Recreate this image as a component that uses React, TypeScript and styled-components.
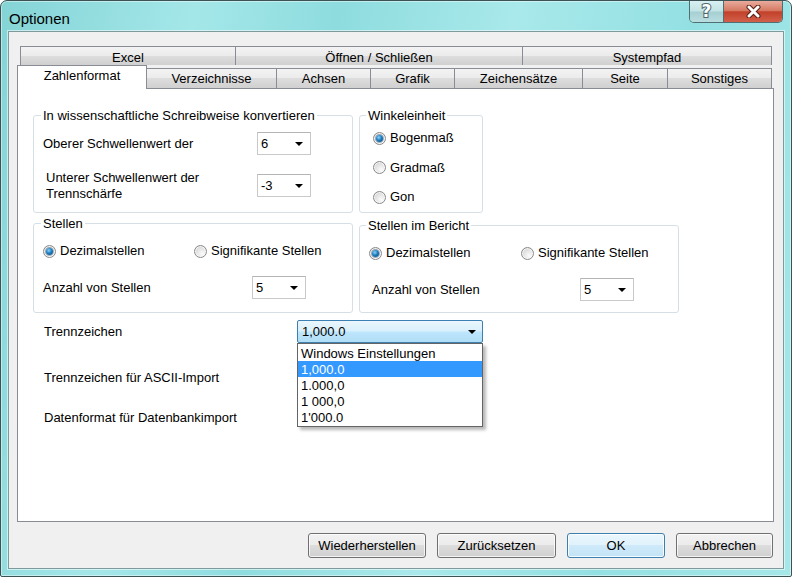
import styled, { createGlobalStyle, css } from "styled-components";

const GlobalStyle = createGlobalStyle`
  * {
    box-sizing: border-box;
  }
  html,
  body {
    margin: 0;
    padding: 0;
  }
  body {
    background: #ffffff;
    font-family: "Liberation Sans", Arial, sans-serif;
    font-size: 13px;
    color: #000000;
  }
`;

const Window = styled.div`
  width: 792px;
  height: 577px;
  display: flex;
  flex-direction: column;
  padding: 0 7px 7px 7px;
  border: 1px solid #3b5354;
  border-radius: 7px 7px 2px 2px;
  background: linear-gradient(
    100deg,
    #84d4d6 0%,
    #a4e7e9 22%,
    #8edcde 38%,
    #a9e9eb 58%,
    #93e0e2 78%,
    #a6e7e8 100%
  );
  box-shadow: inset 0 0 0 1px rgba(255, 255, 255, 0.45);
`;

const TitleBar = styled.div`
  height: 30px;
  display: flex;
  justify-content: space-between;
  align-items: flex-start;
`;

const Title = styled.div`
  margin: 9px 0 0 1px;
  font-size: 15px;
  line-height: 18px;
  color: #000;
`;

const CaptionButtons = styled.div`
  display: flex;
  margin-right: 1px;
  height: 22px;
  border: 1px solid #4f6f72;
  border-top: none;
  border-radius: 0 0 5px 5px;
  overflow: hidden;
`;

const HelpButton = styled.div`
  width: 34px;
  display: flex;
  align-items: center;
  justify-content: center;
  border-right: 1px solid #4f6f72;
  background: linear-gradient(#d9f0f1 0%, #c3e3e5 48%, #a6cfd2 52%, #b9dee0 100%);
`;

const HelpGlyph = styled.span`
  font-family: "DejaVu Sans", "Liberation Sans", sans-serif;
  font-weight: bold;
  font-size: 17px;
  line-height: 17px;
  color: #ffffff;
  -webkit-text-stroke: 2px #4d686b;
  paint-order: stroke fill;
`;

const CloseButton = styled.div`
  width: 58px;
  display: flex;
  align-items: center;
  justify-content: center;
  background: linear-gradient(#e8ab9d 0%, #d67a64 45%, #c2412a 52%, #d2604a 100%);
`;

const Client = styled.div`
  flex: 1;
  display: flex;
  flex-direction: column;
  background: #f0f0f0;
  border: 1px solid #7f9a9c;
  padding: 14px 9px 0 8px;
  box-shadow: 0 0 0 1px rgba(255, 255, 255, 0.55);
`;

const TabRow = styled.div<{ $lower?: boolean }>`
  display: flex;
  height: ${(p) => (p.$lower ? 23 : 19)}px;
  align-items: flex-end;
  margin-left: ${(p) => (p.$lower ? 0 : 3)}px;
`;

const Tab = styled.div<{ $w: number; $active?: boolean; $upper?: boolean }>`
  flex: none;
  width: ${(p) => p.$w}px;
  height: ${(p) => (p.$upper ? 19 : 20)}px;
  margin-left: -1px;
  padding-top: ${(p) => (p.$upper ? 3 : 2)}px;
  border: 1px solid #898c95;
  border-bottom: none;
  background: linear-gradient(#f3f3f3 0%, #ebebeb 50%, #dddddd 50%, #d0d0d0 100%);
  text-align: center;
  line-height: 16px;
  white-space: nowrap;

  &:first-child {
    margin-left: 0;
  }

  ${(p) =>
    p.$active &&
    css`
      position: relative;
      z-index: 2;
      height: 24px;
      margin-bottom: -1px;
      padding-top: 2px;
      background: #ffffff;
    `}
`;

const Panel = styled.div`
  position: relative;
  z-index: 1;
  height: 434px;
  display: flex;
  flex-direction: column;
  border: 1px solid #898c95;
  background: #ffffff;
`;

const GroupRow = styled.div<{ $mt: number }>`
  display: flex;
  align-items: flex-end;
  gap: 6px;
  padding-left: 15px;
  margin-top: ${(p) => p.$mt}px;
`;

const GroupBox = styled.div<{ $w: number; $h?: number }>`
  width: ${(p) => p.$w}px;
  ${(p) => p.$h && `height: ${p.$h}px;`}
  display: flex;
  flex-direction: column;
  border: 1px solid #d5dfe5;
  border-radius: 3px;
`;

const Caption = styled.div<{ $indent: number }>`
  align-self: flex-start;
  margin: -8px 0 0 ${(p) => p.$indent}px;
  padding: 0 2px;
  background: #ffffff;
  line-height: 15px;
  white-space: nowrap;
`;

const ThresholdGrid = styled.div`
  display: grid;
  grid-template-columns: 214px 54px;
  grid-template-rows: 23px 23px;
  row-gap: 19px;
  align-items: center;
  margin: 9px 0 15px 9px;
`;

const FieldLabel = styled.div<{ $indent?: number }>`
  padding-left: ${(p) => p.$indent ?? 0}px;
  line-height: 16px;
  white-space: nowrap;
`;

const Combo = styled.div<{ $w: number }>`
  width: ${(p) => p.$w}px;
  height: 23px;
  display: flex;
  align-items: center;
  justify-content: space-between;
  padding: 0 7px 0 3px;
  border: 1px solid #c9c9c9;
  border-top-color: #b5b5b5;
  background: #ffffff;
  line-height: 16px;
`;

const Arrow = styled.span`
  width: 0;
  height: 0;
  border-left: 4px solid transparent;
  border-right: 4px solid transparent;
  border-top: 4px solid #000000;
`;

const RadioStack = styled.div`
  flex: 1;
  display: flex;
  flex-direction: column;
  justify-content: space-between;
  padding: 7px 0 7px 13px;
`;

const Radio = styled.div`
  display: flex;
  align-items: center;
  gap: 4px;
  height: 16px;
  line-height: 16px;
  white-space: nowrap;
`;

const RadioDot = styled.span<{ $checked?: boolean }>`
  flex: none;
  width: 13px;
  height: 13px;
  display: flex;
  align-items: center;
  justify-content: center;
  border: 1px solid #8a8a8a;
  border-radius: 50%;
  background: radial-gradient(
    circle at 65% 70%,
    #fbfbfb 0%,
    #e6e6e6 45%,
    #c9c9c9 100%
  );
  box-shadow: inset 0 0 0 1px rgba(255, 255, 255, 0.7);

  ${(p) =>
    p.$checked &&
    css`
      &::after {
        content: "";
        width: 7px;
        height: 7px;
        border-radius: 50%;
        background: radial-gradient(
          circle at 40% 35%,
          #8fd3f7 0%,
          #1c7fc2 45%,
          #0a3a66 100%
        );
        box-shadow: 0 0 0 1px rgba(20, 60, 100, 0.35);
      }
    `}
`;

const StellenBody = styled.div<{ $bottom: number }>`
  display: flex;
  flex-direction: column;
  padding: 12px 0 ${(p) => p.$bottom}px 9px;
`;

const RadioLine = styled.div<{ $col: number }>`
  display: grid;
  grid-template-columns: ${(p) => p.$col}px auto;
  height: 16px;
`;

const CountLine = styled.div<{ $col: number; $indent: number }>`
  display: grid;
  grid-template-columns: ${(p) => p.$col}px 54px;
  align-items: center;
  height: 23px;
  margin-top: 17px;
  padding-left: ${(p) => p.$indent}px;
`;

const FormBlock = styled.div`
  display: flex;
  flex-direction: column;
  padding-left: 26px;
`;

const FormRow = styled.div<{ $mt: number }>`
  display: flex;
  align-items: center;
  margin-top: ${(p) => p.$mt}px;
`;

const FormLabel = styled.div`
  flex: none;
  width: 253px;
  line-height: 16px;
  white-space: nowrap;
`;

const DropCombo = styled.div`
  position: relative;
  width: 186px;
  height: 23px;
  display: flex;
  align-items: center;
  justify-content: space-between;
  padding: 0 6px 0 4px;
  border: 1px solid #3c7fb1;
  border-radius: 2px;
  background: linear-gradient(#eaf6fd 0%, #d9f0fc 48%, #bee6fd 52%, #b0ddf5 100%);
  line-height: 16px;
`;

const DropList = styled.div`
  position: absolute;
  z-index: 5;
  top: calc(100% + 1px);
  left: -1px;
  width: 186px;
  padding: 1px 0;
  border: 1px solid #646464;
  background: #ffffff;
  box-shadow: 3px 3px 3px rgba(0, 0, 0, 0.28);
`;

const ListItem = styled.div<{ $selected?: boolean }>`
  height: 16px;
  line-height: 17px;
  padding-left: 3px;
  white-space: nowrap;
  ${(p) =>
    p.$selected &&
    css`
      background: #3399ff;
      color: #ffffff;
    `}
`;

const ButtonRow = styled.div`
  display: flex;
  justify-content: flex-end;
  gap: 11px;
  padding: 11px 1px 0 0;
`;

const Button = styled.div<{ $w: number; $default?: boolean }>`
  width: ${(p) => p.$w}px;
  height: 25px;
  display: flex;
  align-items: center;
  justify-content: center;
  border: 1px solid #707070;
  border-radius: 3px;
  background: linear-gradient(#f2f2f2 0%, #ebebeb 50%, #dddddd 50%, #cfcfcf 100%);
  box-shadow: inset 0 0 0 1px rgba(255, 255, 255, 0.75);
  ${(p) =>
    p.$default &&
    css`
      border-color: #3c7fb1;
      background: linear-gradient(#eaf6fd 0%, #e0f2fc 50%, #cfeafa 50%, #c2e3f6 100%);
      box-shadow: inset 0 0 0 1px rgba(255, 255, 255, 0.85);
    `}
`;

const upperTabs = [
  { label: "Excel", w: 216 },
  { label: "Öffnen / Schließen", w: 288 },
  { label: "Systempfad", w: 250 },
];

const lowerTabs = [
  { label: "Zahlenformat", w: 130, active: true },
  { label: "Verzeichnisse", w: 131 },
  { label: "Achsen", w: 95 },
  { label: "Grafik", w: 85 },
  { label: "Zeichensätze", w: 129 },
  { label: "Seite", w: 86 },
  { label: "Sonstiges", w: 105 },
];

const separators = [
  "Windows Einstellungen",
  "1,000.0",
  "1.000,0",
  "1 000,0",
  "1'000.0",
];

const CloseGlyph = () => (
  <svg width="17" height="13" viewBox="0 0 17 13">
    <path
      d="M4 2 L13 11 M13 2 L4 11"
      stroke="#5a1e14"
      strokeWidth="5"
      strokeLinecap="round"
      fill="none"
    />
    <path
      d="M4 2 L13 11 M13 2 L4 11"
      stroke="#ffffff"
      strokeWidth="3"
      strokeLinecap="round"
      fill="none"
    />
  </svg>
);

type StellenProps = {
  title: string;
  indent: number;
  radioCol: number;
  comboCol: number;
  labelIndent: number;
  bottom: number;
};

const StellenGroup = ({
  title,
  indent,
  radioCol,
  comboCol,
  labelIndent,
  bottom,
}: StellenProps) => (
  <GroupBox $w={320}>
    <Caption $indent={indent}>{title}</Caption>
    <StellenBody $bottom={bottom}>
      <RadioLine $col={radioCol}>
        <Radio>
          <RadioDot $checked />
          Dezimalstellen
        </Radio>
        <Radio>
          <RadioDot />
          Signifikante Stellen
        </Radio>
      </RadioLine>
      <CountLine $col={comboCol} $indent={labelIndent}>
        <FieldLabel>Anzahl von Stellen</FieldLabel>
        <Combo $w={54}>
          5
          <Arrow />
        </Combo>
      </CountLine>
    </StellenBody>
  </GroupBox>
);

const App = () => {
  return (
    <>
      <GlobalStyle />
      <Window>
        <TitleBar>
          <Title>Optionen</Title>
          <CaptionButtons>
            <HelpButton>
              <HelpGlyph>?</HelpGlyph>
            </HelpButton>
            <CloseButton>
              <CloseGlyph />
            </CloseButton>
          </CaptionButtons>
        </TitleBar>
        <Client>
          <TabRow>
            {upperTabs.map((t) => (
              <Tab key={t.label} $w={t.w} $upper>
                {t.label}
              </Tab>
            ))}
          </TabRow>
          <TabRow $lower>
            {lowerTabs.map((t) => (
              <Tab key={t.label} $w={t.w} $active={t.active}>
                {t.label}
              </Tab>
            ))}
          </TabRow>
          <Panel>
            <GroupRow $mt={26}>
              <GroupBox $w={320}>
                <Caption $indent={7}>
                  In wissenschaftliche Schreibweise konvertieren
                </Caption>
                <ThresholdGrid>
                  <FieldLabel>Oberer Schwellenwert der</FieldLabel>
                  <Combo $w={54}>
                    6
                    <Arrow />
                  </Combo>
                  <FieldLabel $indent={3}>
                    Unterer Schwellenwert der
                    <br />
                    Trennschärfe
                  </FieldLabel>
                  <Combo $w={54}>
                    -3
                    <Arrow />
                  </Combo>
                </ThresholdGrid>
              </GroupBox>
              <GroupBox $w={124} $h={98}>
                <Caption $indent={6}>Winkeleinheit</Caption>
                <RadioStack>
                  <Radio>
                    <RadioDot $checked />
                    Bogenmaß
                  </Radio>
                  <Radio>
                    <RadioDot />
                    Gradmaß
                  </Radio>
                  <Radio>
                    <RadioDot />
                    Gon
                  </Radio>
                </RadioStack>
              </GroupBox>
            </GroupRow>
            <GroupRow $mt={10}>
              <StellenGroup
                title="Stellen"
                indent={7}
                radioCol={151}
                comboCol={209}
                labelIndent={0}
                bottom={13}
              />
              <StellenGroup
                title="Stellen im Bericht"
                indent={6}
                radioCol={152}
                comboCol={208}
                labelIndent={3}
                bottom={11}
              />
            </GroupRow>
            <FormBlock>
              <FormRow $mt={7}>
                <FormLabel>Trennzeichen</FormLabel>
                <DropCombo>
                  1,000.0
                  <Arrow />
                  <DropList>
                    {separators.map((s, i) => (
                      <ListItem key={s} $selected={i === 1}>
                        {s}
                      </ListItem>
                    ))}
                  </DropList>
                </DropCombo>
              </FormRow>
              <FormRow $mt={27}>
                <FormLabel>Trennzeichen für ASCII-Import</FormLabel>
              </FormRow>
              <FormRow $mt={24}>
                <FormLabel>Datenformat für Datenbankimport</FormLabel>
              </FormRow>
            </FormBlock>
          </Panel>
          <ButtonRow>
            <Button $w={118}>Wiederherstellen</Button>
            <Button $w={119}>Zurücksetzen</Button>
            <Button $w={98} $default>
              OK
            </Button>
            <Button $w={97}>Abbrechen</Button>
          </ButtonRow>
        </Client>
      </Window>
    </>
  );
};

export default App;
